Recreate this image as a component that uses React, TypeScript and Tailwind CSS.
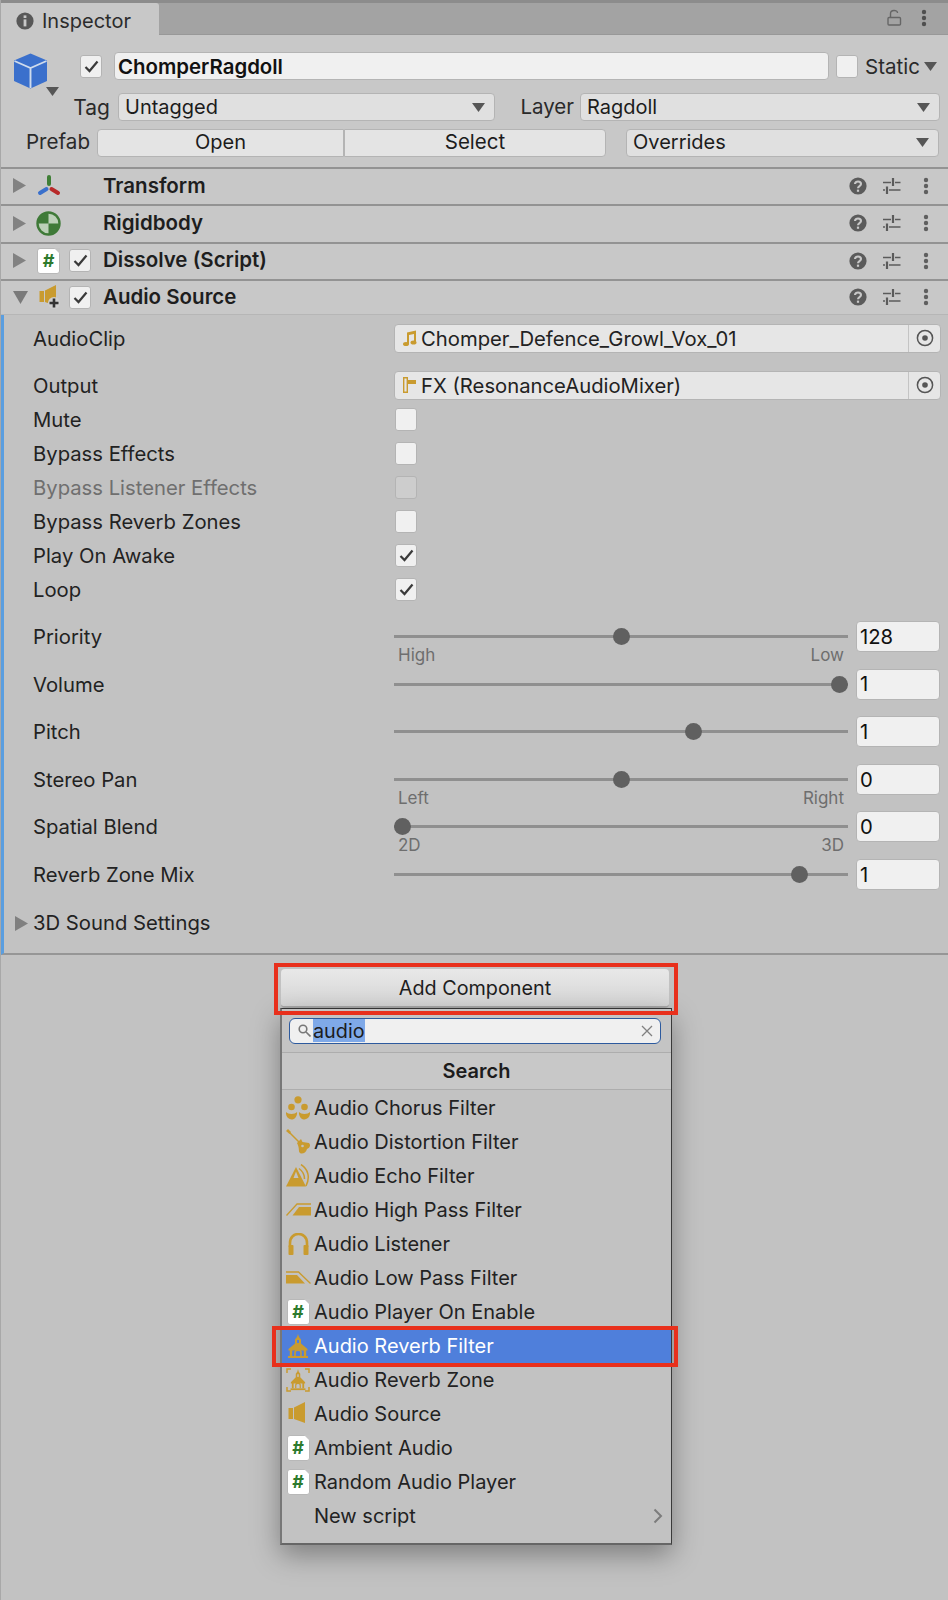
import React from "react";

const GOLD = "#c99b2f";

function Check() {
  return (
    <svg width="15" height="13" viewBox="0 0 15 13">
      <path d="M1.5 7 L5.5 11 L13.5 1.5" fill="none" stroke="#3a3a3a" strokeWidth="2.2" />
    </svg>
  );
}

function Box({ on, off }: { on?: boolean; off?: boolean }) {
  return (
    <div className={`w-[22px] h-[23px] shrink-0 rounded-[3px] border border-[#b4b4b4] flex items-center justify-center ${off ? "bg-[#cdcdcd]" : "bg-[#f0f0f0]"}`}>
      {on ? <Check /> : null}
    </div>
  );
}

function Caret({ className }: { className?: string }) {
  return (
    <svg width="13" height="9" viewBox="0 0 13 9" className={className}>
      <path d="M0 0 H13 L6.5 9 Z" fill="#565656" />
    </svg>
  );
}

function Dots({ color = "#5f5f5f" }: { color?: string }) {
  return (
    <svg width="6" height="18" viewBox="0 0 6 18">
      <circle cx="3" cy="3" r="2.2" fill={color} />
      <circle cx="3" cy="9" r="2.2" fill={color} />
      <circle cx="3" cy="15" r="2.2" fill={color} />
    </svg>
  );
}

function Help() {
  return (
    <svg width="18" height="18" viewBox="0 0 18 18">
      <circle cx="9" cy="9" r="8.6" fill="#5b5b5b" />
      <path d="M6 7 C6 3.6 12 3.6 12 7 C12 9.2 9 9 9 11.2" fill="none" stroke="#c8c8c8" strokeWidth="2.1" />
      <rect x="7.9" y="12.6" width="2.2" height="2.2" fill="#c8c8c8" />
    </svg>
  );
}

function Presets() {
  return (
    <svg width="18" height="18" viewBox="0 0 18 18" stroke="#5b5b5b" fill="none">
      <path d="M0 5.5 H8 M12 5.5 H17.5 M0 13 H2 M6 13 H17.5" strokeWidth="1.6" />
      <path d="M10 1 V9 M4 9.5 V17" strokeWidth="2.2" />
    </svg>
  );
}

function ScriptIcon() {
  return (
    <div className="relative w-[23px] h-[26px] shrink-0 bg-white rounded-[3px] border border-[#b8b8b8] flex items-center justify-center font-bold text-[#2d7a2d] text-[18px] leading-none">
      #
      <div className="absolute top-[-1px] right-[-1px] w-0 h-0 border-l-[6px] border-l-transparent border-t-[6px] border-t-[#c4c4c4]" />
    </div>
  );
}

function Cube() {
  return (
    <svg width="35" height="36" viewBox="0 0 35 36">
      <path d="M17.5 0.5 L34 7.5 V28 L17.5 35.5 L1 28 V7.5 Z" fill="#3b70cc" />
      <path d="M1.5 8 L17.5 15 L33.5 8 M17.5 15 V35" fill="none" stroke="#cfdbec" strokeWidth="1.9" />
    </svg>
  );
}

function TransformIcon() {
  return (
    <svg width="24" height="22" viewBox="0 0 24 22" fill="none" strokeLinecap="round">
      <path d="M12 2 V9" stroke="#3f7f36" strokeWidth="4" />
      <path d="M9.5 14 L3 18" stroke="#3a70cc" strokeWidth="4" />
      <path d="M14.5 14 L21 18" stroke="#b82a2a" strokeWidth="4" />
    </svg>
  );
}

function RigidIcon() {
  return (
    <svg width="25" height="25" viewBox="0 0 25 25">
      <circle cx="12.5" cy="12.5" r="11" fill="#bcd0b8" stroke="#3f7a38" strokeWidth="2.4" />
      <path d="M12.5 12.5 V1.5 A11 11 0 0 0 1.5 12.5 Z M12.5 12.5 V23.5 A11 11 0 0 0 23.5 12.5 Z" fill="#3f7a38" />
    </svg>
  );
}

function Speaker({ plus }: { plus?: boolean }) {
  return (
    <svg width="24" height="26" viewBox="0 0 24 26">
      <rect x="2.5" y="7" width="4.5" height="11" fill={GOLD} />
      <path d="M8 6.5 L19 1 V22 L8 18 Z" fill={GOLD} />
      {plus ? (
        <>
          <circle cx="17" cy="19" r="6" fill="#cfcfcf" />
          <path d="M17 14.5 V23.5 M12.5 19 H21.5" stroke="#333" strokeWidth="2.6" />
        </>
      ) : null}
    </svg>
  );
}

function ChurchBody({ hole }: { hole: string }) {
  return (
    <>
      <path d="M10 0 L11 3 L13 5.5 V9.5 L19.5 15 V16.5 H0.5 V15 L7 9.5 V5.5 L9 3 Z" fill={GOLD} />
      <rect x="9" y="6" width="2" height="3" fill={hole} />
      <path d="M3 16 V22 M17 16 V22" stroke={GOLD} strokeWidth="2.4" />
      <path d="M7 22 V18.5 C7 15.5 13 15.5 13 18.5 V22" fill={hole} stroke={GOLD} strokeWidth="1.6" />
      <rect x="0" y="22" width="20" height="2" fill={GOLD} />
    </>
  );
}

function Church() {
  return (
    <svg width="20" height="24" viewBox="0 0 20 24">
      <ChurchBody hole="#4f7fdb" />
    </svg>
  );
}

function Zone() {
  return (
    <svg width="24" height="24" viewBox="0 0 24 24">
      <g transform="translate(4.5 1) scale(0.75 0.88)">
        <ChurchBody hole="#c2c2c2" />
      </g>
      <path d="M1 5 V1 H5 M19 1 H23 V5 M1 19 V23 H5 M19 23 H23 V19" fill="none" stroke={GOLD} strokeWidth="1.5" />
    </svg>
  );
}

function MenuIcon({ kind }: { kind: string }) {
  if (kind === "script") return <ScriptIcon />;
  if (kind === "church") return <Church />;
  if (kind === "zone") return <Zone />;
  if (kind === "speaker") return <Speaker />;
  if (kind === "chorus")
    return (
      <svg width="24" height="24" viewBox="0 0 24 24" fill={GOLD}>
        <circle cx="12" cy="3.8" r="3.6" />
        <circle cx="5.5" cy="11" r="3.3" />
        <circle cx="18.5" cy="11" r="3.3" />
        <path d="M0 16 C2 18.5 9 18.5 11 16 C11.5 21 8 23.5 5.5 23.5 C3 23.5 -0.5 21 0 16 Z" />
        <path d="M13 16 C15 18.5 22 18.5 24 16 C24.5 21 21 23.5 18.5 23.5 C16 23.5 12.5 21 13 16 Z" />
      </svg>
    );
  if (kind === "guitar")
    return (
      <svg width="25" height="25" viewBox="0 0 25 25" fill={GOLD}>
        <path d="M0 2 L2 0 L5 3 L3.5 5 Z" />
        <path d="M3 3 L13 13" stroke={GOLD} strokeWidth="1.5" />
        <path d="M11 14 L15 10 L16.5 13 L23 14 C25 16 24 19 21 20 C20 24 16 25.5 14 24 C12 22 14 20 11 14 Z" />
        <circle cx="16.5" cy="17" r="1.3" fill="#c2c2c2" />
      </svg>
    );
  if (kind === "echo")
    return (
      <svg width="24" height="24" viewBox="0 0 24 24" fill="none">
        <path d="M0 22.5 L10 3 L20 22.5 Z" fill={GOLD} />
        <path d="M10 7.5 L7.5 14 H12.5 Z" fill="#c2c2c2" />
        <path d="M13 4.5 C16.5 7 18.5 11 18.5 15 M15 0.5 C22 5 24.5 13 20 22" stroke={GOLD} strokeWidth="1.5" />
      </svg>
    );
  if (kind === "high")
    return (
      <svg width="25" height="13" viewBox="0 0 25 13" fill="none">
        <path d="M0.5 12.5 L11 1 H25" stroke={GOLD} strokeWidth="1.3" />
        <path d="M6.5 12.5 L13 4 H25 V12.5 Z" fill={GOLD} />
      </svg>
    );
  if (kind === "low")
    return (
      <svg width="25" height="13" viewBox="0 0 25 13" fill="none">
        <path d="M0 1 H12.5 L24.5 12.5" stroke={GOLD} strokeWidth="1.3" />
        <path d="M0 4 H11 L19 12.5 H0 Z" fill={GOLD} />
      </svg>
    );
  if (kind === "head")
    return (
      <svg width="21" height="22" viewBox="0 0 21 22" fill="none">
        <path d="M2 14 V10 C2 -2 19 -2 19 10 V14" stroke={GOLD} strokeWidth="2.6" />
        <rect x="0.5" y="12" width="5" height="10" rx="1" fill={GOLD} />
        <rect x="15.5" y="12" width="5" height="10" rx="1" fill={GOLD} />
      </svg>
    );
  return <div className="w-[24px]" />;
}

function Tool({ children }: { children: React.ReactNode }) {
  return <div className="w-[34px] flex items-center justify-center">{children}</div>;
}

function CompHeader({ name, icon, check, open }: { name: string; icon: React.ReactNode; check?: boolean; open?: boolean }) {
  return (
    <div className={`flex items-center border-t-2 border-t-[#939393] bg-[#c8c8c8] ${open ? "h-[36px] border-b border-b-[#b6b6b6]" : "h-[37.33px] pb-[1.5px]"}`}>
      <div className="w-[33px] pl-[12px] flex items-center">
        {open ? (
          <svg width="15" height="13" viewBox="0 0 15 13"><path d="M0 0 H15 L7.5 13 Z" fill="#7a7a7a" /></svg>
        ) : (
          <svg width="13" height="15" viewBox="0 0 13 15"><path d="M0 0 L13 7.5 L0 15 Z" fill="#828282" /></svg>
        )}
      </div>
      <div className="w-[29px] flex items-center justify-center">{icon}</div>
      <div className="w-[40px] pl-[6px]">{check ? <Box on /> : null}</div>
      <div className="flex-1 font-semibold text-[20.5px] text-[#1e1e1e]">{name}</div>
      <div className="flex items-center pr-[5px]">
        <Tool><Help /></Tool>
        <Tool><Presets /></Tool>
        <Tool><Dots /></Tool>
      </div>
    </div>
  );
}

function Field({ icon, text }: { icon: React.ReactNode; text: string }) {
  return (
    <div className="ml-[361px] mr-[7px] h-[29px] rounded-[4px] border border-[#b4b4b4] bg-[#e6e6e6] flex items-center">
      <div className="w-[26px] flex justify-center pl-[3px]">{icon}</div>
      <div className="flex-1 whitespace-nowrap pt-[2px]">{text}</div>
      <div className="w-[32px] h-full border-l border-[#c4c4c4] flex items-center justify-center">
        <svg width="18" height="18" viewBox="0 0 18 18">
          <circle cx="9" cy="9" r="7.6" fill="none" stroke="#555" strokeWidth="1.5" />
          <circle cx="9" cy="9" r="2.8" fill="#555" />
        </svg>
      </div>
    </div>
  );
}

function Dropdown({ text, className }: { text: string; className: string }) {
  return (
    <div className={`h-[28px] rounded-[4px] border border-[#b4b4b4] bg-[#e0e0e0] flex items-center justify-between pl-[6px] pr-[9px] ${className}`}>
      <span>{text}</span>
      <Caret />
    </div>
  );
}

const toggles: [string, boolean, boolean?][] = [
  ["Mute", false],
  ["Bypass Effects", false],
  ["Bypass Listener Effects", false, true],
  ["Bypass Reverb Zones", false],
  ["Play On Awake", true],
  ["Loop", true],
];

const sliders: { name: string; value: string; pos: number; low?: string; high?: string }[] = [
  { name: "Priority", value: "128", pos: 0.5, low: "High", high: "Low" },
  { name: "Volume", value: "1", pos: 1 },
  { name: "Pitch", value: "1", pos: 0.667 },
  { name: "Stereo Pan", value: "0", pos: 0.5, low: "Left", high: "Right" },
  { name: "Spatial Blend", value: "0", pos: 0, low: "2D", high: "3D" },
  { name: "Reverb Zone Mix", value: "1", pos: 0.909 },
];

const items: [string, string][] = [
  ["Audio Chorus Filter", "chorus"],
  ["Audio Distortion Filter", "guitar"],
  ["Audio Echo Filter", "echo"],
  ["Audio High Pass Filter", "high"],
  ["Audio Listener", "head"],
  ["Audio Low Pass Filter", "low"],
  ["Audio Player On Enable", "script"],
  ["Audio Reverb Filter", "church"],
  ["Audio Reverb Zone", "zone"],
  ["Audio Source", "speaker"],
  ["Ambient Audio", "script"],
  ["Random Audio Player", "script"],
  ["New script", "none"],
];

export default function App() {
  return (
    <div className="w-[948px] h-[1600px] overflow-hidden bg-[#c2c2c2] text-[#1c1c1c] text-[20px] leading-none border-l border-[#a8a8a8]" style={{ fontFamily: "Inter, 'Liberation Sans', sans-serif" }}>
      {/* tab bar */}
      <div className="h-[35px] bg-[#a3a3a3] border-t-[3px] border-t-[#8c8c8c] border-b border-b-[#989898] flex items-stretch justify-between">
        <div className="w-[158px] h-[32px] bg-[#c8c8c8] rounded-tr-[3px] flex items-center pl-[15px] pt-[3px] gap-[8px] text-[#2c2c2c]">
          <svg width="18" height="18" viewBox="0 0 18 18">
            <circle cx="9" cy="9" r="8.6" fill="#585858" />
            <rect x="7.6" y="7.4" width="2.8" height="7" fill="#c8c8c8" />
            <rect x="7.6" y="3.4" width="2.8" height="2.6" fill="#c8c8c8" />
          </svg>
          <span>Inspector</span>
        </div>
        <div className="flex items-center gap-[19px] pr-[21px] pb-[2px]">
          <svg width="15" height="17" viewBox="0 0 15 17" fill="none" stroke="#666" strokeWidth="1.4">
            <path d="M3.5 8 V4.5 C3.5 0.5 10.5 0.5 10.5 4" />
            <rect x="1" y="8.5" width="12.5" height="7.5" rx="1" />
          </svg>
          <Dots color="#4f4f4f" />
        </div>
      </div>
      {/* object header */}
      <div className="h-[132px] bg-[#c8c8c8]">
        <div className="flex pt-[17px] h-[58px]">
          <div className="w-[79px] pl-[12px] pt-[1px] relative">
            <Cube />
            <Caret className="absolute left-[45px] top-[35px]" />
          </div>
          <div className="pt-[3px]"><Box on /></div>
          <div className="ml-[12px] w-[715px] h-[28px] rounded-[4px] border border-[#b4b4b4] bg-[#f0f0f0] flex items-center pl-[3px] pt-[3px] font-semibold text-[20.4px] text-[#111]">ChomperRagdoll</div>
          <div className="ml-[7px] pt-[3px]"><Box /></div>
          <div className="ml-[7px] pt-[5px] flex gap-[4px]">
            <span className="text-[#2a2a2a] text-[20.5px]">Static</span>
            <Caret className="mt-[5px]" />
          </div>
        </div>
        <div className="flex items-center h-[28px]">
          <div className="w-[117px] text-right pr-[8px] text-[#2a2a2a] text-[21px]">Tag</div>
          <Dropdown text="Untagged" className="w-[377px]" />
          <div className="w-[85px] text-right pr-[6px] text-[#2a2a2a] text-[20.5px]">Layer</div>
          <Dropdown text="Ragdoll" className="w-[360px]" />
        </div>
        <div className="flex items-center h-[28px] mt-[8px]">
          <div className="w-[96px] text-right pr-[7px] pb-[2px] text-[#2a2a2a] text-[20.6px]">Prefab</div>
          <div className="w-[247px] h-full rounded-l-[4px] border border-[#b4b4b4] bg-[#e4e4e4] pb-[2px] flex items-center justify-center">Open</div>
          <div className="w-[262px] h-full rounded-r-[4px] border border-[#b4b4b4] bg-[#e4e4e4] pb-[2px] flex items-center justify-center text-[20.5px]">Select</div>
          <Dropdown text="Overrides" className="ml-[20px] w-[313px] pb-[2px]" />
        </div>
      </div>
      <CompHeader name="Transform" icon={<TransformIcon />} />
      <CompHeader name="Rigidbody" icon={<RigidIcon />} />
      <CompHeader name="Dissolve (Script)" icon={<ScriptIcon />} check />
      <CompHeader name="Audio Source" icon={<Speaker plus />} check open />
      {/* audio source body */}
      <div className="h-[640px] border-l-[3px] border-l-[#5a9ee0] border-b-2 border-b-[#969696] pl-[29px] text-[#222] text-[20.25px] pt-[9px]">
        <div className="relative">
          <div className="absolute left-0 top-[5px]">AudioClip</div>
          <Field
            text="Chomper_Defence_Growl_Vox_01"
            icon={
              <svg width="14" height="16" viewBox="0 0 14 16" fill={GOLD}>
                <path d="M4 2.5 L13 0.5 V12 H11 V4 L6 5 V14 H4 Z" />
                <ellipse cx="3" cy="14" rx="3" ry="2" />
                <ellipse cx="10.5" cy="12.5" rx="3" ry="2" />
              </svg>
            }
          />
        </div>
        <div className="relative mt-[18px]">
          <div className="absolute left-0 top-[5px]">Output</div>
          <Field
            text="FX (ResonanceAudioMixer)"
            icon={
              <svg width="13" height="16" viewBox="0 0 13 16">
                <path d="M0.7 0.7 H4.3 V15.3 H0.7 Z" fill="none" stroke={GOLD} strokeWidth="1.4" />
                <rect x="5" y="3" width="8" height="4" fill={GOLD} />
              </svg>
            }
          />
        </div>
        <div className="mt-[3px]">
          {toggles.map(([name, on, off]) => (
            <div key={name} className="h-[34px] flex items-center">
              <div className={`w-[362px] ${off ? "text-[#6f6f6f]" : ""}`}>{name}</div>
              <Box on={on} off={off} />
            </div>
          ))}
        </div>
        <div className="mt-[6px]">
          {sliders.map((s) => (
            <div key={s.name} className="h-[47.6px] flex items-start">
              <div className="w-[361px] pt-[14px]">{s.name}</div>
              <div className="w-[454px] pt-[15px]">
                <div className="relative h-[17px] flex items-center">
                  <div className="w-full h-[3px] bg-[#8f8f8f]" />
                  <div className="absolute w-[17px] h-[17px] rounded-full bg-[#606060]" style={{ left: `${s.pos * 437}px` }} />
                </div>
                {s.low ? (
                  <div className="flex justify-between px-[4px] mt-[2px] text-[17px] text-[#6e6e6e]">
                    <span>{s.low}</span>
                    <span>{s.high}</span>
                  </div>
                ) : null}
              </div>
              <div className="ml-[8px] mt-[8px] w-[84px] h-[31px] rounded-[4px] border border-[#b4b4b4] bg-[#f0f0f0] flex items-center pl-[3px] pt-[1px] text-[#111]">{s.value}</div>
            </div>
          ))}
        </div>
        <div className="flex items-center h-[34px] mt-[8px] -ml-[18px]">
          <svg width="13" height="15" viewBox="0 0 13 15"><path d="M0 0 L13 7.5 L0 15 Z" fill="#808080" /></svg>
          <span className="ml-[5px]">3D Sound Settings</span>
        </div>
      </div>
      {/* add component + popup */}
      <div className="relative w-[390px] ml-[279px] pt-[14px]">
        <div className="absolute left-[-6px] top-[8px] w-[404px] h-[52px] border-[4px] border-[#e8301c] z-10" />
        <div className="mx-[1px] h-[39px] rounded-[4px] bg-gradient-to-b from-[#e8e8e8] to-[#d6d6d6] border-b-2 border-b-[#a8a8a8] flex items-center justify-center pt-[2px] text-[#1e1e1e] text-[19.8px]">Add Component</div>
        <div className="w-[392px] h-[537px] border-t border-t-[#333] border-l-2 border-l-[#777] border-r border-r-[#3a3a3a] border-b-2 border-b-[#666] bg-[#c2c2c2] shadow-[0_10px_26px_rgba(0,0,0,0.35)] relative">
          <div className="h-[44px] bg-[#c4c4c4] border-b border-b-[#adadad] pl-[7px] pr-[10px] pt-[9px]">
            <div className="h-[26px] rounded-[6px] border border-[#2d5a9e] bg-[#f0f0f0] flex items-center pl-[8px] pr-[7px]">
              <svg width="13" height="13" viewBox="0 0 13 13" fill="none" stroke="#777" strokeWidth="1.6">
                <circle cx="5" cy="5" r="3.8" />
                <path d="M8 8 L12.5 12.5" />
              </svg>
              <span className="ml-[2px] h-[23px] bg-[#7fa9e8] flex items-center pt-[2px] text-[19.8px]">audio</span>
              <span className="flex-1" />
              <svg width="12" height="12" viewBox="0 0 12 12" stroke="#808080" strokeWidth="1.3">
                <path d="M1 1 L11 11 M11 1 L1 11" />
              </svg>
            </div>
          </div>
          <div className="h-[37px] bg-[#c8c8c8] border-b border-b-[#adadad] flex items-center justify-center font-semibold">Search</div>
          <div className="pt-[1px]">
            {items.map(([name, kind]) => {
              const sel = name === "Audio Reverb Filter";
              return (
                <div key={name} className={`h-[34px] flex items-center ${sel ? "bg-[#4f7fdb] text-white" : "text-[#222]"}`}>
                  <div className="w-[32px] flex items-center justify-center shrink-0">
                    <MenuIcon kind={kind} />
                  </div>
                  <span className="flex-1">{name}</span>
                  {kind === "none" ? (
                    <svg width="10" height="16" viewBox="0 0 10 16" className="mr-[8px]" fill="none" stroke="#7c7c7c" strokeWidth="2">
                      <path d="M1.5 1.5 L8 8 L1.5 14.5" />
                    </svg>
                  ) : null}
                </div>
              );
            })}
          </div>
          <div className="absolute left-[-10px] top-[317px] w-[406px] h-[41px] border-[4px] border-[#e8301c]" />
        </div>
      </div>
    </div>
  );
}
